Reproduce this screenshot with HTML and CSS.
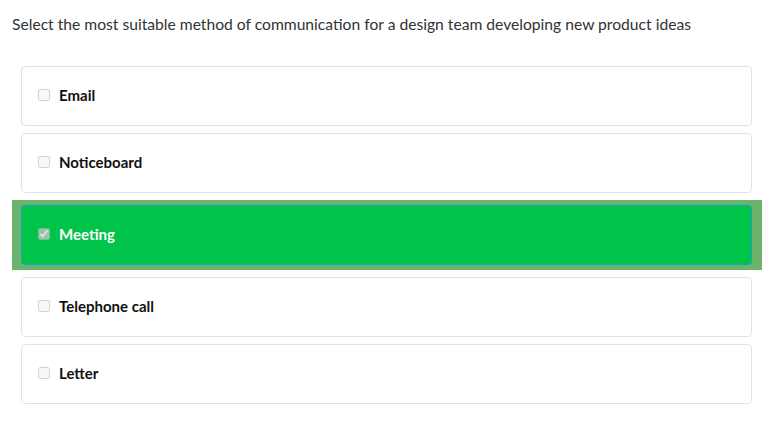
FILE: index.html
```html
<!DOCTYPE html>
<html>
<head>
<meta charset="utf-8">
<link rel="stylesheet" href="styles.css">
</head>
<body>
<div class="page">
  <p class="question">Select the most suitable method of communication for a design team developing new product ideas</p>
  <div class="options">
    <div class="option-wrap"><label class="option"><input type="checkbox" disabled><span>Email</span></label></div>
    <div class="option-wrap"><label class="option"><input type="checkbox" disabled><span>Noticeboard</span></label></div>
    <div class="option-wrap selected"><label class="option"><input type="checkbox" disabled checked><span>Meeting</span></label></div>
    <div class="option-wrap"><label class="option"><input type="checkbox" disabled><span>Telephone call</span></label></div>
    <div class="option-wrap"><label class="option"><input type="checkbox" disabled><span>Letter</span></label></div>
  </div>
</div>
</body>
</html>
```
FILE: styles.css
```css
html, body {
  margin: 0;
  padding: 0;
  background: #ffffff;
}
.page {
  padding: 14px 20px 0 12px;
  font-family: Lato, "Open Sans", sans-serif;
}
.question {
  margin: 0;
  font-size: 15.65px;
  line-height: 20px;
  color: #2f3337;
}
.options {
  display: flex;
  flex-direction: column;
  gap: 7px;
  margin: 32px 0 0 9px;
}
.option-wrap.selected {
  background: #6cb36c;
  padding: 5px 10px 5px 9px;
  margin: 0 -10px 0 -9px;
}
.option {
  display: flex;
  align-items: center;
  box-sizing: border-box;
  height: 60px;
  padding: 0 12px 2px;
  border: 1px solid #dfe3e8;
  border-radius: 4px;
  background: #fff;
  font-size: 15px;
  font-weight: bold;
  color: #111;
}
.option input {
  margin: 0 9px 0 4px;
  width: 12px;
  height: 12px;
}
.selected .option {
  background: #00c34a;
  border-color: #1da1c6;
  color: #fff;
}
```
